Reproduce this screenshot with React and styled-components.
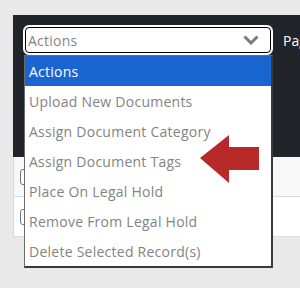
import React from "react";
import styled, { createGlobalStyle } from "styled-components";

const GlobalStyle = createGlobalStyle`
  body {
    margin: 0;
    background: #e9e9e9;
    font-family: "Open Sans", "Liberation Sans", sans-serif;
  }
`;

const options = [
  "Actions",
  "Upload New Documents",
  "Assign Document Category",
  "Assign Document Tags",
  "Place On Legal Hold",
  "Remove From Legal Hold",
  "Delete Selected Record(s)",
];

const App = () => {
  return (
    <>
      <GlobalStyle />
      <Page>
        <Panel>
          <Toolbar>
            <SelectWrap>
              <SelectBox>
                <span>Actions</span>
                <svg width="16" height="10" viewBox="0 0 16 10">
                  <path d="M1.5 1.5 L8 8 L14.5 1.5" fill="none" stroke="#7a7a7a" strokeWidth="3" />
                </svg>
              </SelectBox>
              <Menu>
                {options.map((opt, index) => (
                  <Option key={index} active={index === 0}>{opt}</Option>
                ))}
              </Menu>
            </SelectWrap>
            <PageLabel>Page</PageLabel>
          </Toolbar>
        </Panel>
        <Table>
          <Row striped>
            <Check />
          </Row>
          <Row>
            <Check />
          </Row>
        </Table>
        <Arrow width="60" height="48" viewBox="0 0 60 48">
          <polygon points="0,23 29,0 29,12 59,12 59,35 29,35 29,48" fill="#b82a2a" />
        </Arrow>
      </Page>
    </>
  );
};

export default App;

const Page = styled.div`
  position: relative;
  padding: 15px 0 0 13px;
  height: 273px;
  overflow: hidden;
`;

const Panel = styled.div`
  background: #212428;
  height: 142px;
  padding: 10px 0 0 10px;
  box-sizing: border-box;
`;

const Toolbar = styled.div`
  display: flex;
  align-items: center;
  gap: 10px;
  height: 30px;
`;

const SelectWrap = styled.div`
  position: relative;
  flex-shrink: 0;
  width: 250px;
  height: 30px;
`;

const SelectBox = styled.div`
  box-sizing: border-box;
  height: 30px;
  background: #fff;
  border: 2px solid #fff;
  outline: 1.5px solid #000;
  outline-offset: -3px;
  border-radius: 6px;
  display: flex;
  align-items: center;
  justify-content: space-between;
  padding: 0 12px 0 3px;
  font-size: 14px;
  letter-spacing: 0.25px;
  color: #858585;
`;

const Menu = styled.div`
  position: absolute;
  top: 30px;
  left: 1px;
  width: 249px;
  box-sizing: border-box;
  background: #fff;
  border: 1px solid #6b6b6b;
  border-right-width: 2px;
  border-bottom-width: 2px;
  border-right-color: #3a3a3a;
  border-bottom-color: #3a3a3a;
`;

const Option = styled.div`
  height: 30px;
  display: flex;
  align-items: center;
  padding-left: 4px;
  font-size: 14px;
  letter-spacing: 0.25px;
  background: ${(p) => (p.active ? "#1a66d0" : "#fff")};
  color: ${(p) => (p.active ? "#fff" : "#838383")};
  font-weight: ${(p) => (p.active ? 500 : 400)};
`;

const PageLabel = styled.span`
  color: #fff;
  font-size: 14px;
  white-space: nowrap;
`;

const Table = styled.div`
  border-left: 1px solid #d8d8d8;
  background: #fff;
`;

const Row = styled.div`
  height: 40px;
  box-sizing: border-box;
  border-bottom: 1px solid #dcdcdc;
  background: ${(p) => (p.striped ? "#f8f8f8" : "#fff")};
  display: flex;
  align-items: center;
  padding-left: 6px;
`;

const Check = styled.div`
  width: 14px;
  height: 14px;
  border: 1px solid #777;
  border-radius: 3px;
  background: #fff;
`;

const Arrow = styled.svg`
  position: absolute;
  left: 200px;
  top: 135px;
`;
